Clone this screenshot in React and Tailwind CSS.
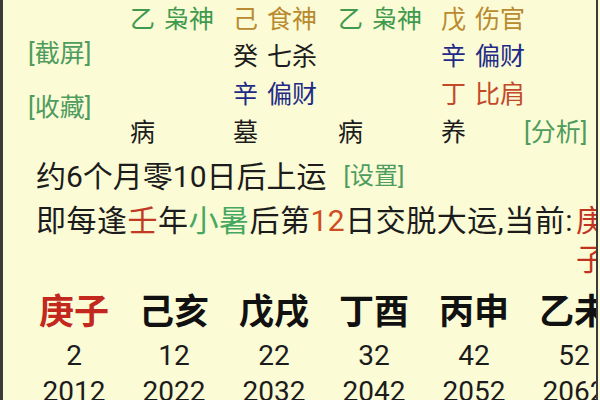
import React from 'react';

const gua = [
  [
    { a: '乙', b: '枭神', c: 'text-[#3f9a4e]' },
    { a: '己', b: '食神', c: 'text-[#b98a30]' },
    { a: '乙', b: '枭神', c: 'text-[#3f9a4e]' },
    { a: '戊', b: '伤官', c: 'text-[#b98a30]' },
  ],
  [
    null,
    { a: '癸', b: '七杀', c: 'text-[#1c1c1c]' },
    null,
    { a: '辛', b: '偏财', c: 'text-[#1e2a86]' },
  ],
  [
    null,
    { a: '辛', b: '偏财', c: 'text-[#1e2a86]' },
    null,
    { a: '丁', b: '比肩', c: 'text-[#c24a2a]' },
  ],
];

const stages = ['病', '墓', '病', '养'];

const yun = [
  { name: '庚子', age: 2, year: 2012, red: true },
  { name: '己亥', age: 12, year: 2022 },
  { name: '戊戌', age: 22, year: 2032 },
  { name: '丁酉', age: 32, year: 2042 },
  { name: '丙申', age: 42, year: 2052 },
  { name: '乙未', age: 52, year: 2062 },
];

const App = () => {
  return (
    <div className="w-[600px] h-[400px] bg-[#fbfbd6] font-[Roboto,'Noto_Sans_CJK_SC',sans-serif] text-[#1c1c1c]">
      <div className="w-[598px] h-full border-l-[3px] border-r-[2px] border-[#3a3a3a] overflow-hidden">
        {/* top table */}
        <div className="flex pl-[25px]">
          <div className="w-[102px] shrink-0 flex flex-col pt-[36px] gap-[18px] text-[25px] leading-[36px] text-[#4e9c5e] whitespace-nowrap">
            <span>[截屏]</span>
            <span>[收藏]</span>
          </div>
          <div className="grid grid-cols-[103px_105px_103px_83px_auto] grid-rows-[37px_37px_38px_38px] pt-[1px] items-center text-[25px] leading-none whitespace-nowrap">
            {gua.map((row, i) => (
              <React.Fragment key={i}>
                {row.map((g, j) => (
                  <div key={j}>
                    {g && (
                      <span className={g.c}>
                        {g.a}
                        <span className="ml-[9px]">{g.b}</span>
                      </span>
                    )}
                  </div>
                ))}
                <div />
              </React.Fragment>
            ))}
            {stages.map((s, j) => (
              <div key={j}>{s}</div>
            ))}
            <div className="text-[#4e9c5e]">[分析]</div>
          </div>
        </div>

        {/* start of luck text */}
        <div className="pl-[33px] mt-[5px] flex items-center h-[40px] whitespace-nowrap">
          <span className="text-[30px]">约6个月零10日后上运</span>
          <span className="ml-[17px] text-[24px] text-[#4e9c5e]">[设置]</span>
        </div>
        <div className="pl-[33px] mt-[5px] flex items-start whitespace-nowrap text-[30px] leading-[39px]">
          <span className="tracking-[0.5px]">
            即每逢<span className="text-[#c23a22]">壬</span>年
            <span className="text-[#45a860]">小暑</span>后第
            <span className="text-[#d04a22]">12</span>日交脱大运,当前:
          </span>
          <span className="ml-[3px] w-[30px] flex flex-col text-[#c2331f]">
            <span>庚</span>
            <span>子</span>
          </span>
        </div>

        {/* big luck columns */}
        <div className="pl-[21px] mt-[14px] grid grid-cols-[repeat(6,100px)] text-center whitespace-nowrap">
          {yun.map((y) => (
            <div key={y.name} className="flex flex-col">
              <span className={`text-[35px] leading-[40px] font-bold ${y.red ? 'text-[#c2281e]' : 'text-[#111111]'}`}>
                {y.name}
              </span>
              <span className="mt-[5px] text-[28px] leading-[36px]">{y.age}</span>
              <span className="text-[28px] leading-[36px]">{y.year}</span>
            </div>
          ))}
        </div>
      </div>
    </div>
  );
};

export default App;
